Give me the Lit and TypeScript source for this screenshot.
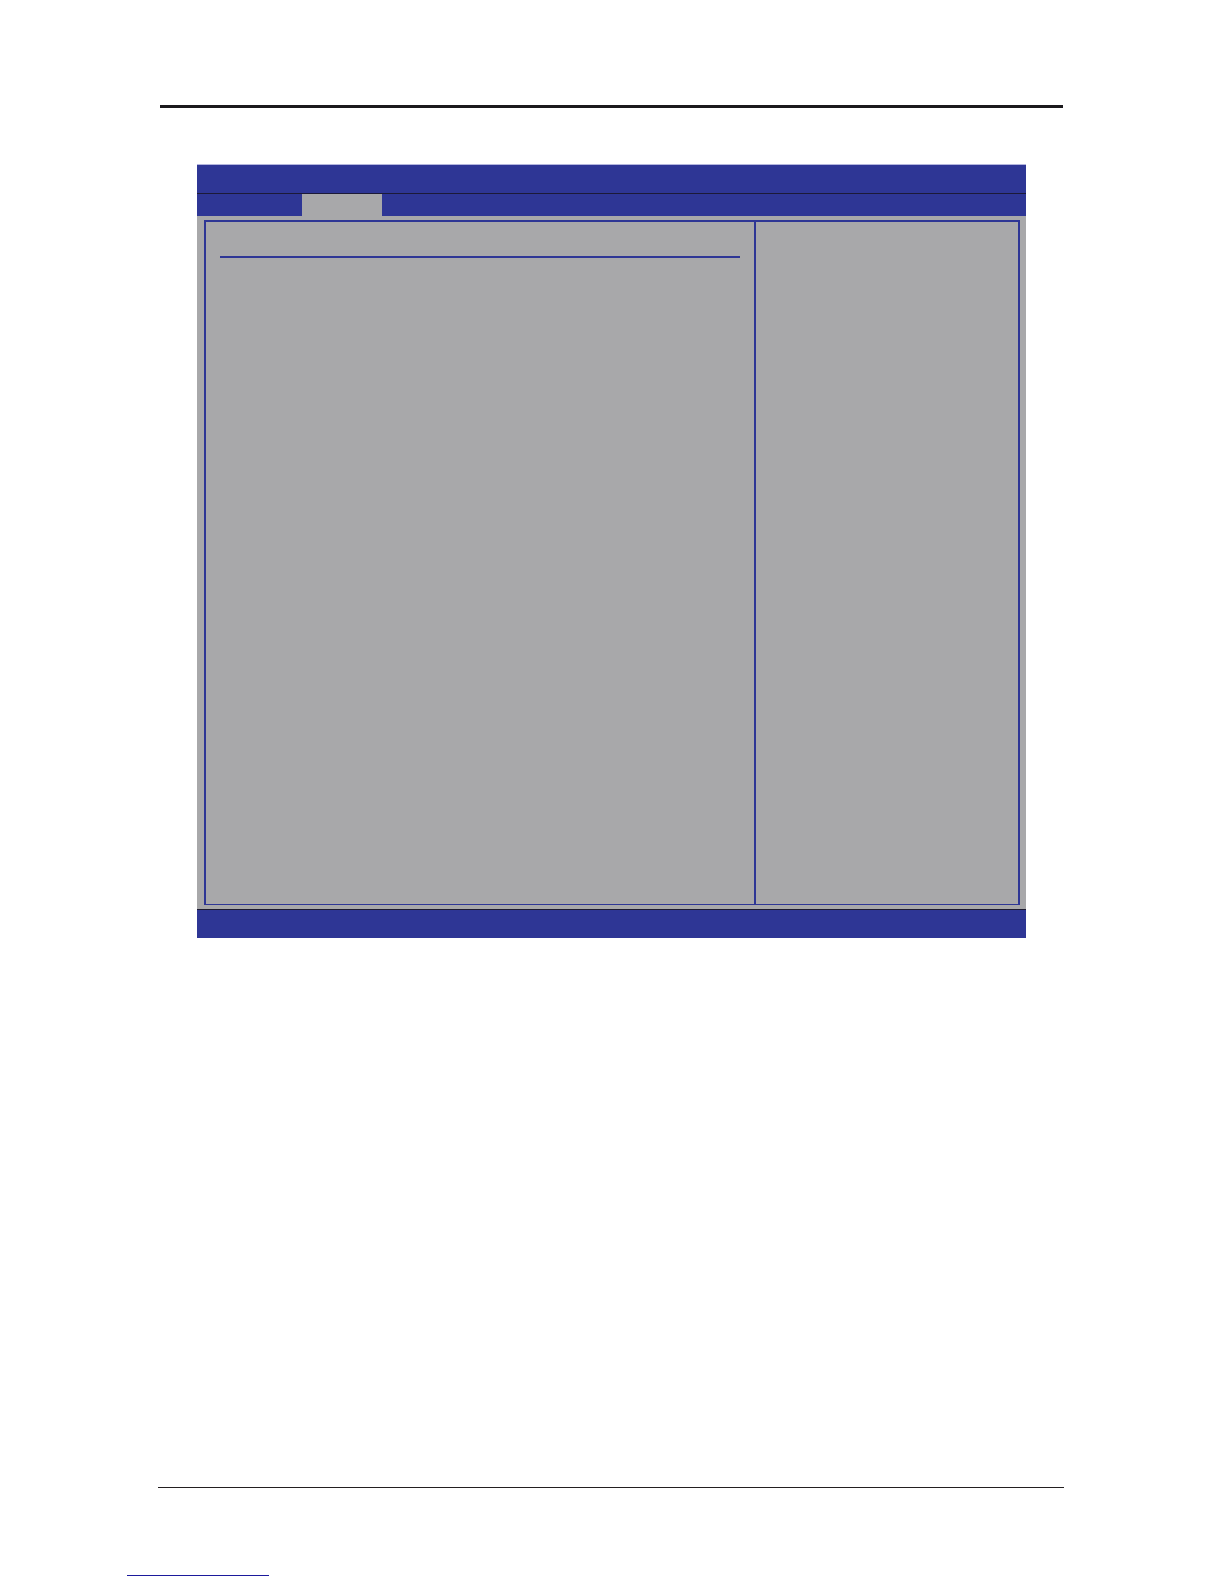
import { LitElement, html, css } from "lit";
import { customElement } from "lit/decorators.js";

@customElement("setup-screen")
class SetupScreen extends LitElement {
  static styles = css`
    :host {
      display: block;
      background: #a8a8aa;
      border-top: 1px solid #b3b5de;
    }
    .title {
      height: 28px;
      background: #2e3695;
      border-bottom: 1px solid #1c1a38;
    }
    .tabs {
      display: flex;
      height: 22px;
      background: #2e3695;
    }
    .lead {
      width: 105px;
    }
    .tab {
      width: 80px;
      background: #a8a8aa;
    }
    .panels {
      display: grid;
      grid-template-columns: 548fr 264fr;
      min-height: 682px;
      margin: 4px 6px 4px 7px;
      border: 2px solid #2e3695;
      border-bottom-width: 1px;
    }
    .main {
      padding: 34px 14px 0;
    }
    .divider {
      height: 2px;
      background: #2e3695;
    }
    .help {
      border-left: 2px solid #2e3695;
    }
    .footer {
      height: 28px;
      background: #2e3695;
      border-top: 1px solid #1c1a30;
    }
  `;

  render() {
    return html`
      <header class="title"></header>
      <nav class="tabs">
        <div class="lead"></div>
        <div class="tab"></div>
      </nav>
      <section class="panels">
        <div class="main"><div class="divider"></div></div>
        <aside class="help"></aside>
      </section>
      <footer class="footer"></footer>
    `;
  }
}

@customElement("app-root")
class AppRoot extends LitElement {
  static styles = css`
    :host {
      display: block;
      font-family: "Liberation Sans", sans-serif;
    }
    .page {
      box-sizing: border-box;
      display: flex;
      flex-direction: column;
      min-height: 100vh;
      padding: 105px 160px 8px 158px;
      background: #ffffff;
    }
    .top-rule {
      height: 3px;
      margin: 0 1px 56px 2px;
      background: #1b191d;
    }
    .screen {
      margin: 0 38px 0 39px;
    }
    .bottom-rule {
      height: 1px;
      margin-top: auto;
      background: #231f20;
    }
    .link-rule {
      width: 142px;
      height: 1px;
      margin: 87px 0 0 -31px;
      background: #1c1a9c;
    }
  `;

  render() {
    return html`
      <main class="page">
        <div class="top-rule"></div>
        <setup-screen class="screen"></setup-screen>
        <div class="bottom-rule"></div>
        <div class="link-rule"></div>
      </main>
    `;
  }
}
